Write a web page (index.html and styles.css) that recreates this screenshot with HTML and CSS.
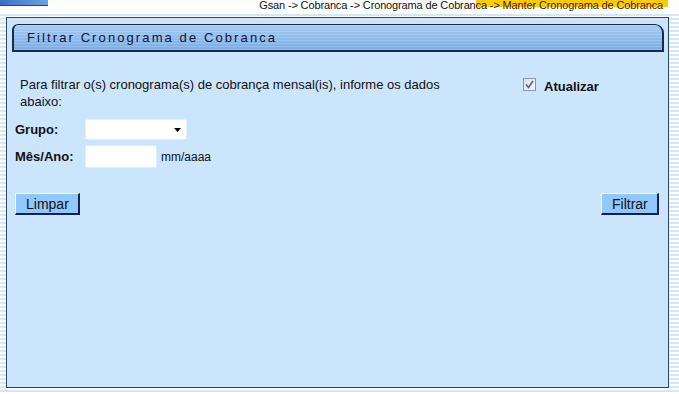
FILE: index.html
```html
<!DOCTYPE html>
<html lang="pt">
<head>
<meta charset="utf-8">
<title>Filtrar Cronograma de Cobranca</title>
<link rel="stylesheet" href="styles.css">
</head>
<body>
<div class="top">
  <div class="logo-bar"></div>
  <div class="crumbs">Gsan -&gt; Cobranca -&gt; Cronograma de Cobranca <span class="current">-&gt; Manter Cronograma de Cobranca</span></div>
</div>
<div class="panel">
  <div class="tab">Filtrar Cronograma de Cobranca</div>
  <form class="form">
    <div class="intro">
      <p class="intro-text">Para filtrar o(s) cronograma(s) de cobrança mensal(is), informe os dados abaixo:</p>
      <label class="update">
        <span class="check"><svg width="9" height="9" viewBox="0 0 9 9"><path d="M1 4.5 L3.5 7.5 L8 1" fill="none" stroke="#4c60a8" stroke-width="1.6"/></svg></span>
        <span class="update-label">Atualizar</span>
      </label>
    </div>
    <div class="row row-grupo">
      <span class="label">Grupo:</span>
      <select class="select"><option></option></select>
    </div>
    <div class="row row-mes">
      <span class="label">Mês/Ano:</span>
      <input class="input" type="text">
      <span class="hint">mm/aaaa</span>
    </div>
    <div class="actions">
      <button type="button" class="btn">Limpar</button>
      <button type="button" class="btn">Filtrar</button>
    </div>
  </form>
</div>
</body>
</html>
```
FILE: styles.css
```css
html, body {
  margin: 0;
  padding: 0;
}
body {
  width: 679px;
  height: 394px;
  overflow: hidden;
  font-family: "Liberation Sans", Arial, sans-serif;
  color: #111;
  background: repeating-linear-gradient(to bottom, #ffffff 0, #ffffff 2px, #d3e7f8 2px, #d3e7f8 4px);
}
.top {
  height: 17px;
  display: flex;
  justify-content: space-between;
  align-items: flex-start;
  background: linear-gradient(to bottom, #ffffff 0, #ffffff 12px, transparent 12px);
}
.logo-bar {
  width: 48px;
  height: 5px;
  background: linear-gradient(to right, #3b6fc4, #6d9fe2);
  border-bottom: 1px solid #27457a;
}
.crumbs {
  font-size: 11px;
  line-height: 10px;
  letter-spacing: -0.14px;
  padding-right: 16px;
  padding-left: 4px;
  white-space: nowrap;
  color: #111;
  background: linear-gradient(#ffcc00, #ffcc00) no-repeat right 11px top / 192px 7px;
}
.current {
  color: #3a1800;
}
.panel {
  margin-left: 6px;
  width: 663px;
  height: 371px;
  box-sizing: border-box;
  border: 1px solid #2c4563;
  background: #cbe5fd;
  padding-top: 6px;
}
.tab {
  margin: 0 4px 0 5px;
  height: 28px;
  box-sizing: border-box;
  border: 2px solid #1b2b40;
  border-top-width: 1px;
  border-radius: 6px 9px 0 0;
  padding: 0 0 1px 13px;
  display: flex;
  align-items: center;
  font-size: 13px;
  letter-spacing: 2.1px;
  color: #0f1530;
  background:
    repeating-linear-gradient(to bottom, rgba(255,255,255,0.18) 0, rgba(255,255,255,0.18) 1px, transparent 1px, transparent 3px),
    linear-gradient(to bottom, #a4cbf5, #78ace6);
}
.form {
  padding: 24px 9px 0 8px;
}
.intro {
  display: grid;
  grid-template-columns: 503px auto;
  padding-left: 5px;
}
.intro-text {
  margin: 0;
  max-width: 450px;
  font-size: 13px;
  line-height: 17px;
}
.update {
  display: flex;
  align-items: flex-start;
  gap: 8px;
  padding-top: 2px;
}
.check {
  width: 13px;
  height: 13px;
  box-sizing: border-box;
  border: 1px solid #8d96a4;
  background: linear-gradient(to bottom right, #dcdfe4, #f4f5f7);
  display: flex;
  align-items: center;
  justify-content: center;
}
.update-label {
  font-size: 13px;
  font-weight: bold;
  line-height: 16px;
  padding-top: 1px;
}
.row {
  display: flex;
  align-items: center;
}
.row-grupo {
  margin-top: 9px;
}
.row-mes {
  margin-top: 5px;
}
.label {
  width: 70px;
  font-size: 13px;
  font-weight: bold;
}
.select {
  appearance: none;
  -webkit-appearance: none;
  width: 102px;
  height: 21px;
  margin: 0;
  border: 1px solid #e2eef9;
  border-radius: 2px;
  background: #fff url("data:image/svg+xml,%3Csvg xmlns='http://www.w3.org/2000/svg' width='7' height='4'%3E%3Cpath d='M0 0H7L3.5 4Z' fill='%23000'/%3E%3C/svg%3E") no-repeat right 5px center;
}
.input {
  width: 72px;
  height: 23px;
  box-sizing: border-box;
  margin: 0;
  border: 1px solid #e2eef9;
  border-radius: 2px;
  background: #fff;
}
.hint {
  margin-left: 4px;
  font-size: 12px;
}
.actions {
  margin-top: 25px;
  display: flex;
  justify-content: space-between;
}
.btn {
  height: 22px;
  padding: 0 10px;
  margin: 0;
  font-family: "Liberation Sans", Arial, sans-serif;
  font-size: 14px;
  color: #111;
  background: #91c8fc;
  border-style: solid;
  border-width: 1px 2px 2px 1px;
  border-color: #ffffff #13214f #13214f #ffffff;
  border-radius: 0;
}
.btn:first-child {
  width: 65px;
}
.btn:last-child {
  width: 58px;
}
```
